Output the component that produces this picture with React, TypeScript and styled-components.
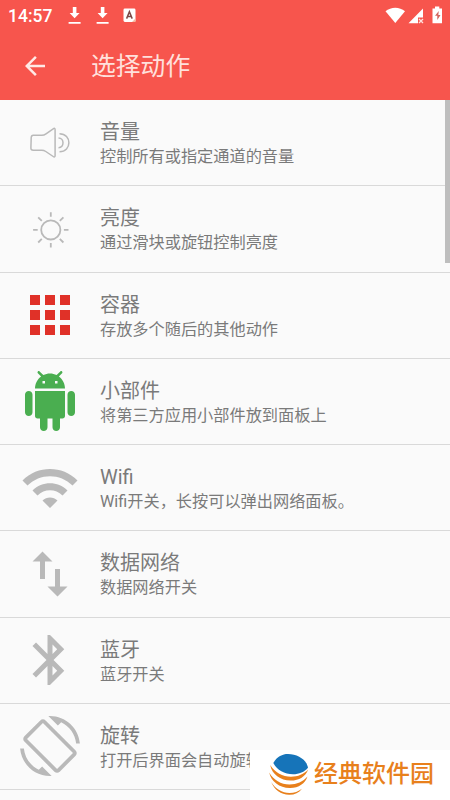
import React from "react";
import styled, { createGlobalStyle } from "styled-components";

const GlobalStyle = createGlobalStyle`
  * { box-sizing: border-box; }
  body {
    margin: 0;
    background: #fafafa;
    font-family: Roboto, "Noto Sans CJK SC", sans-serif;
  }
`;

const Screen = styled.div`
  position: relative;
  width: 450px;
  height: 800px;
  overflow: hidden;
  background: #fafafa;
`;

const Header = styled.header`
  height: 100px;
  background: #f7554d;
  color: #fff;
`;

const StatusBar = styled.div`
  display: flex;
  align-items: center;
  height: 31px;
  padding: 0 7px 0 8px;
`;

const Clock = styled.span`
  width: 60px;
  font-size: 17.5px;
  font-weight: 500;
  line-height: 32px;
`;

const StatusIcons = styled.div`
  display: flex;
  align-items: center;
  height: 31px;
`;

const SystemIcons = styled(StatusIcons)`
  margin-left: auto;
`;

const Toolbar = styled.div`
  display: flex;
  align-items: center;
  height: 69px;
  padding-left: 20px;
`;

const BackButton = styled.button`
  display: flex;
  width: 71px;
  padding: 0;
  border: 0;
  background: none;
  color: #ffe9e6;
`;

const Title = styled.h1`
  margin: 0;
  padding-top: 3px;
  color: #ffe0dc;
  font-size: 24.8px;
  font-weight: 400;
  line-height: 36px;
`;

const List = styled.ul`
  margin: 0;
  padding: 0;
  list-style: none;
`;

const Row = styled.li`
  display: flex;
  align-items: center;
  height: 86.25px;
  padding-left: 20.2px;
  border-bottom: 1px solid #d9d9d9;
`;

const RowIcon = styled.svg<{ $color?: string }>`
  flex: none;
  width: 60px;
  height: 60px;
  margin-right: 19.8px;
  color: ${(p) => p.$color ?? "#b9b9b9"};
  fill: currentColor;
`;

const RowText = styled.div`
  padding-top: 3px;
  color: #7a7a7a;
  white-space: nowrap;
`;

const Name = styled.div`
  font-size: 20px;
  line-height: 26px;
`;

const Description = styled.div`
  font-size: 16.2px;
  line-height: 24px;
`;

const ScrollThumb = styled.div`
  position: absolute;
  top: 100px;
  right: 0;
  width: 5px;
  height: 163px;
  background: #bebebe;
`;

const Brand = styled.div`
  position: absolute;
  right: 0;
  bottom: 0;
  display: flex;
  align-items: center;
  width: 200px;
  height: 50px;
  padding-left: 17px;
  background: #fff;
`;

const BrandName = styled.span`
  margin-left: 4px;
  padding-bottom: 2px;
  color: #e8801c;
  font-size: 24px;
  font-weight: 500;
  line-height: 30px;
  white-space: nowrap;
`;

const DownloadIcon = () => (
  <svg width="27.5" height="20" viewBox="0 0 27.5 20" fill="currentColor">
    <path d="M4.8 1h3.6v6h3.2l-5 5.2-5-5.2h3.2zM.6 16h12v1.7H.6z" />
  </svg>
);

const LetterBadge = () => (
  <svg width="13" height="20" viewBox="0 0 13 20">
    <rect x=".5" y="2.6" width="12" height="13.3" rx="1.4" fill="#fff" />
    <path d="M3.6 12.6 6.4 5.8l2.8 6.8M4.6 10.5h3.6" fill="none" stroke="#7d4a48" strokeWidth="1.5" />
    <path d="m9 15.9 3.5-3.5v3.5z" fill="#f5b9a0" />
  </svg>
);

const SignalIcons = () => (
  <svg width="58" height="20" viewBox="0 0 58 20" fill="#fff">
    <path d="M.5 5.3C6 .5 14.5.5 20 5.3L10.3 17z" />
    <path d="M38 2.5v9h-5v5.7H23.5z" />
    <path d="m34 13 4 4m0-4-4 4" stroke="#ffe1dd" strokeWidth="1.3" />
    <path d="M50 .5h4.3v2H57v14.7h-9.5V2.5H50z" />
    <path d="M53.8 5 50 9.7h2.3v4.3l3.2-4.9h-2.2z" fill="#d2655f" />
  </svg>
);

const BackArrow = () => (
  <svg width="30" height="30" viewBox="0 0 24 24" fill="currentColor">
    <path d="M20 11H7.83l5.59-5.59L12 4l-8 8 8 8 1.41-1.41L7.83 13H20v-2z" />
  </svg>
);

const BrandLogo = () => (
  <svg width="43" height="46" viewBox="0 0 43 46">
    <path d="M6.300 11C10 4.500 15.500 2 21 2c9.500 0 18.500 5.500 20 13.800C37.500 20 32 22.300 26 22.300 17.500 22.300 10 18 6.300 11z" fill="#1674b9" />
    <g fill="#e8801c">
      <path d="M3.200 13C8 20.500 15.500 24.700 24 24.700c7 0 13-2.500 17.200-7.200C38.500 24.500 32 28.700 23.500 28.600 13.500 28.500 5 22.500 3.200 13z" />
      <path d="M2.200 20.500C6.500 28 14 32.500 22.500 32.500c7.300 0 13.500-2.900 18-8C38.200 31.500 31.500 36.200 22.700 36 12.500 35.800 4 29.500 2.200 20.500z" />
      <path d="M4.200 30C8.500 37 15 40.800 22.500 40.900c4.800 0 8.800-1.400 12.500-4.200-3.300 4.300-7.700 6.300-13 6.100C14 42.500 7.300 37.800 4.200 30z" />
    </g>
  </svg>
);

type Action = {
  name: string;
  description: string;
  viewBox: string;
  color?: string;
  art: React.ReactNode;
};

const outline = { fill: "none", stroke: "currentColor", strokeLinejoin: "round" } as const;

const actions: Action[] = [
  {
    name: "音量",
    description: "控制所有或指定通道的音量",
    viewBox: "0 0 60 60",
    art: (
      <g {...outline} strokeWidth="1.5">
        <path d="M13.200 22.300h8.600c1.800 0 3-.6 4.200-1.500l7.200-5c1.200-.8 1.900-.5 1.900.9v25.800c0 1.500-.8 1.800-1.900 1l-7.400-5c-1.200-.8-2.400-1.300-4-1.300h-8.600c-1.600 0-2.400-.8-2.300-2.200l.3-10.500c.1-1.500.7-2.200 2-2.200z" />
        <path d="M38.500 25c6 0 6 9.700 0 9.700M39.500 20.800c12.500 0 12.500 18 0 18" />
      </g>
    ),
  },
  {
    name: "亮度",
    description: "通过滑块或旋钮控制亮度",
    viewBox: "0 0 60 60",
    art: (
      <g {...outline} strokeWidth="1.8">
        <circle cx="30.800" cy="30.900" r="9.600" />
        <path d="M30.800 13.200v4.600M30.800 44v4.600M13.100 30.900h4.600M43.900 30.900h4.600M18.200 18.300l3.600 3.600M39.800 39.900l3.600 3.600M43.400 18.300l-3.600 3.600M21.800 39.900l-3.600 3.600" />
      </g>
    ),
  },
  {
    name: "容器",
    description: "存放多个随后的其他动作",
    viewBox: "0 0 24 24",
    color: "#e03128",
    art: <path d="M4 8h4V4H4v4zm6 12h4v-4h-4v4zm-6 0h4v-4H4v4zm0-6h4v-4H4v4zm6 0h4v-4h-4v4zm6-10v4h4V4h-4zm-6 4h4V4h-4v4zm6 6h4v-4h-4v4zm0 6h4v-4h-4v4z" />,
  },
  {
    name: "小部件",
    description: "将第三方应用小部件放到面板上",
    viewBox: "0 0 24 24",
    color: "#4aae50",
    art: <path d="M6 18c0 .55.45 1 1 1h1v3.5c0 .83.67 1.5 1.5 1.5s1.500-.67 1.500-1.500V19h2v3.500c0 .83.67 1.500 1.500 1.500s1.500-.67 1.500-1.500V19h1c.55 0 1-.45 1-1V8H6v10zM3.500 8C2.670 8 2 8.670 2 9.500v7c0 .83.67 1.500 1.500 1.500S5 17.330 5 16.500v-7C5 8.670 4.330 8 3.500 8zm17 0c-.83 0-1.500.67-1.500 1.500v7c0 .83.67 1.500 1.500 1.500s1.500-.67 1.500-1.500v-7c0-.83-.67-1.500-1.500-1.500zm-4.970-5.840l1.300-1.300c.2-.2.2-.51 0-.71-.2-.2-.51-.2-.71 0l-1.480 1.480C13.850 1.230 12.950 1 12 1c-.96 0-1.860.23-2.660.63L7.850.15c-.2-.2-.51-.2-.71 0-.2.2-.2.51 0 .71l1.310 1.310C6.970 3.260 6 5.010 6 7h12c0-1.990-.97-3.750-2.470-4.840zM10 5H9V4h1v1zm5 0h-1V4h1v1z" />,
  },
  {
    name: "Wifi",
    description: "Wifi开关，长按可以弹出网络面板。",
    viewBox: "0 0 24 24",
    art: <path d="M1 9l2 2c4.970-4.970 13.030-4.970 18 0l2-2C16.930 2.930 7.080 2.930 1 9zm8 8l3 3 3-3c-1.650-1.660-4.340-1.660-6 0zm-4-4l2 2c2.760-2.760 7.240-2.760 10 0l2-2C15.140 9.140 8.870 9.140 5 13z" />,
  },
  {
    name: "数据网络",
    description: "数据网络开关",
    viewBox: "0 0 24 24",
    art: <path d="M16 17.010V10h-2v7.010h-3L15 21l4-3.990h-3zM9 3L5 6.990h3V14h2V6.990h3L9 3z" />,
  },
  {
    name: "蓝牙",
    description: "蓝牙开关",
    viewBox: "0 0 24 24",
    art: <path d="M17.710 7.710L12 2h-1v7.590L6.410 5 5 6.410 10.590 12 5 17.590 6.410 19 11 14.410V22h1l5.710-5.710-4.300-4.290 4.300-4.290zM13 5.830l1.880 1.880L13 9.590V5.830zm1.880 10.460L13 18.170v-3.760l1.880 1.880z" />,
  },
  {
    name: "旋转",
    description: "打开后界面会自动旋转",
    viewBox: "0 0 24 24",
    art: <path d="M16.480 2.520c3.270 1.550 5.610 4.720 5.970 8.480h1.500C23.440 4.840 18.290 0 12 0l-.66.03 3.810 3.810 1.330-1.320zm-6.250-.77c-.59-.59-1.540-.59-2.120 0L1.750 8.110c-.59.59-.59 1.540 0 2.120l12.020 12.020c.59.59 1.540.59 2.120 0l6.360-6.360c.59-.59.59-1.540 0-2.120L10.230 1.750zm4.600 19.440L2.810 9.170l6.360-6.360 12.020 12.020-6.360 6.360zm-7.310.29C4.250 19.940 1.910 16.760 1.550 13H.05C.56 19.160 5.710 24 12 24l.66-.03-3.810-3.810-1.330 1.320z" />,
  },
];

export default function App() {
  return (
    <>
      <GlobalStyle />
      <Screen>
        <Header>
          <StatusBar>
            <Clock>14:57</Clock>
            <StatusIcons>
              <DownloadIcon />
              <DownloadIcon />
              <LetterBadge />
            </StatusIcons>
            <SystemIcons>
              <SignalIcons />
            </SystemIcons>
          </StatusBar>
          <Toolbar>
            <BackButton aria-label="返回">
              <BackArrow />
            </BackButton>
            <Title>选择动作</Title>
          </Toolbar>
        </Header>
        <List>
          {actions.map((action) => (
            <Row key={action.name}>
              <RowIcon viewBox={action.viewBox} $color={action.color}>
                {action.art}
              </RowIcon>
              <RowText>
                <Name>{action.name}</Name>
                <Description>{action.description}</Description>
              </RowText>
            </Row>
          ))}
        </List>
        <ScrollThumb />
        <Brand>
          <BrandLogo />
          <BrandName>经典软件园</BrandName>
        </Brand>
      </Screen>
    </>
  );
}
